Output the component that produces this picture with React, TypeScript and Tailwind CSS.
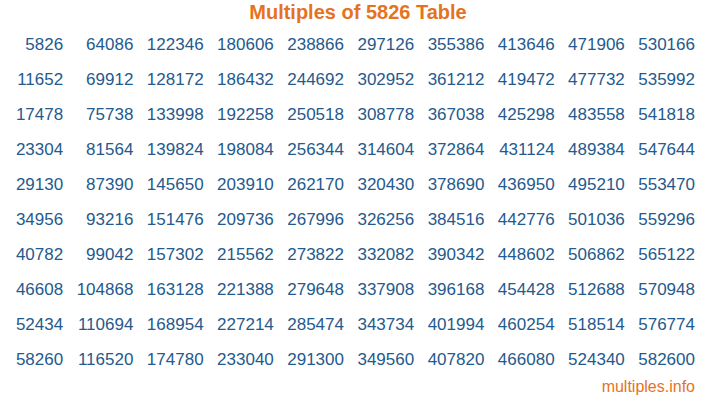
import React from "react";

const BASE = 5826;

function App() {
  const rows = Array.from({ length: 10 }, (_, r) => r);
  const cols = Array.from({ length: 10 }, (_, c) => c);

  return (
    <div className="w-[716px] h-[400px] bg-white font-['Liberation_Sans',Arial,sans-serif]">
      <h1 className="h-[27px] pt-[1px] text-center text-[20px] leading-[22px] font-bold text-[#e5731e]">
        Multiples of {BASE} Table
      </h1>
      <div className="grid w-[702px] grid-cols-10 text-[17px] leading-[35px] text-[#245a8d]">
        {rows.map((r) =>
          cols.map((c) => (
            <div key={`${r}-${c}`} className="pr-[7px] text-right">
              {BASE * (c * 10 + r + 1)}
            </div>
          ))
        )}
      </div>
      <div className="pr-[21px] text-right text-[16px] leading-[20px] text-[#e5731e]">
        multiples.info
      </div>
    </div>
  );
}

export default App;
